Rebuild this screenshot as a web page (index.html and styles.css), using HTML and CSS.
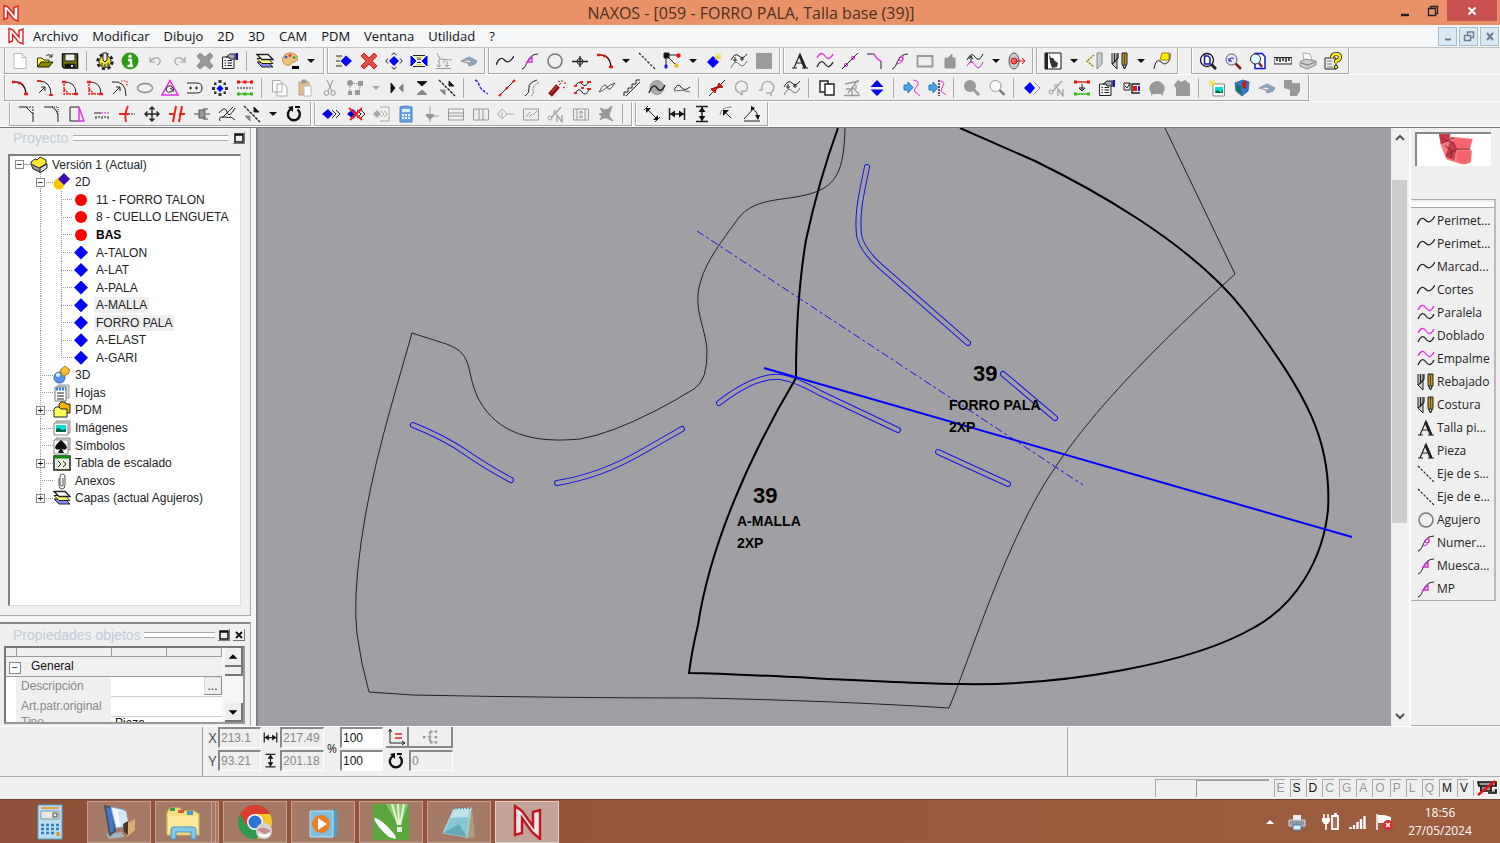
FILE: index.html
```html
<!DOCTYPE html>
<html lang="es">
<head>
<meta charset="utf-8">
<title>NAXOS</title>
<link rel="stylesheet" href="styles.css">
</head>
<body>
<svg class="sprite" aria-hidden="true">
<symbol id="logo" viewBox="0 0 18 18"><path d="M2 1.500L6 3 12 10V3.500L16 2V17L12 15.500 5.500 7.500V14L2 15.500Z" fill="#fff" stroke="#dc2020" stroke-width="1.400"/></symbol>
<symbol id="new" viewBox="0 0 18 18"><path d="M3 1.500H11L15 5.500V16.500H3Z" fill="#fff" stroke="#b8b8b8"/><path d="M11 1.500V5.500H15" stroke="#b8b8b8"/></symbol>
<symbol id="open" viewBox="0 0 18 18"><path d="M1.500 15V6H6L8 8H13V10" fill="#ffff70" stroke="#333300"/><path d="M1.500 15L5 10H17L13 15Z" fill="#868600" stroke="#222200"/><path d="M10 4Q13 1 16 5M13 5H16V2" /></symbol>
<symbol id="save" viewBox="0 0 18 18"><path d="M1.500 2H16.500V16H3L1.500 14.500Z" fill="#777700" stroke="#111" stroke-width="1.500"/><path d="M4 2H14V9H4Z" fill="#eee"/><path d="M4 12H14V16H4Z" fill="#111"/><path d="M11 13V15" stroke="#eee" stroke-width="2"/></symbol>
<symbol id="gear" viewBox="0 0 18 18"><circle cx="9" cy="9.500" r="7" stroke="#222" stroke-width="3.400" stroke-dasharray="3 2.500"/><circle cx="9" cy="9.500" r="6" fill="#e4dc38" stroke="#333"/><path d="M7 1H11V8L9 10 7 8Z" fill="#eee"/><path d="M6 11V14M9 12V15M12 11V14"/></symbol>
<symbol id="info" viewBox="0 0 18 18"><circle cx="9" cy="9" r="8.500" fill="#2c9c10" stroke="none"/><path d="M7 8H10V14M6.500 14H12" stroke="#fff" stroke-width="2.400"/><circle cx="9" cy="4.300" r="1.700" fill="#fff" stroke="none"/></symbol>
<symbol id="undo" viewBox="0 0 18 18"><path d="M4 5V10H9M4 10Q7 5 12 6 16 8 13 12L11 13" stroke="#a5a5a5" stroke-width="1.200"/></symbol>
<symbol id="redo" viewBox="0 0 18 18"><path d="M14 5V10H9M14 10Q11 5 6 6 2 8 5 12L7 13" stroke="#a5a5a5" stroke-width="1.200"/></symbol>
<symbol id="cross" viewBox="0 0 18 18"><path d="M1 4L4 1 9 5 14 1 17 4 13 9 17 14 14 17 9 13 4 17 1 14 5 9Z" fill="#989898" stroke="#909090"/></symbol>
<symbol id="crossred" viewBox="0 0 18 18"><path d="M1 4L4 1 9 6 14 1 17 4 12 9 17 14 14 17 9 12 4 17 1 14 6 9Z" fill="#e64b46" stroke="#bd2d2d"/></symbol>
<symbol id="props" viewBox="0 0 18 18"><path d="M1.500 5H13V16.500H1.500Z" fill="#f4f4f4"/><path d="M3.500 8.500H5M6.500 8.500H11M3.500 11H5M6.500 11H11M3.500 13.500H5M6.500 13.500H11"/><path d="M5 5L9 2H14V7H9L8 5Z" fill="#aaa"/><path d="M14.500 1H17V8H14.500Z" fill="#1414a8" stroke="none"/></symbol>
<symbol id="layers" viewBox="0 0 18 18"><path d="M1 10L6 15H17L12 10Z" fill="#88f"/><path d="M1 6.500L6 11.500H17L12 6.500Z" fill="#ff7"/><path d="M1 2.500L6 7.500H17L12 2.500Z" fill="#fff" stroke-width="1.300"/></symbol>
<symbol id="palette" viewBox="0 0 18 18"><path d="M2 10Q0 5 5 2 12-1 16 4 18 9 13 10 10 10 9 13 4 14 2 10Z" fill="#efc27a" stroke="#c48a3c"/><circle cx="5" cy="5" r="1.500" fill="#35c" stroke="none"/><circle cx="9" cy="3.500" r="1.500" fill="#e34" stroke="none"/><circle cx="13" cy="5.500" r="1.500" fill="#3a4" stroke="none"/><path d="M11 15.500H18" stroke="#000" stroke-width="3"/></symbol>
<symbol id="drop" viewBox="0 0 18 18"><path d="M5 7H13L9 11Z" fill="currentColor" stroke="none"/></symbol>
<symbol id="sew" viewBox="0 0 18 18"><path d="M11 3.500L17 9 11 14.500 5.500 9Z" fill="#00f" stroke="none"/><path d="M1 4H7M1 9H5M1 14H7"/><path d="M2 6H6M2 12H6" stroke="#dd4"/></symbol>
<symbol id="diamove" viewBox="0 0 18 18"><path d="M9 4L14 9 9 14 4 9Z" fill="#00f" stroke="none"/><path d="M6.500 3L9 .8 11.500 3M6.500 15L9 17.200 11.500 15M3 6.500L.8 9 3 11.500M15 6.500L17.200 9 15 11.500"/></symbol>
<symbol id="mirrorb" viewBox="0 0 18 18"><path d="M1 4L6 9 1 14ZM17 4L12 9 17 14Z" fill="#00f" stroke="#00f"/><path d="M3 3.500H15M7 7H11M7 10.500H11M3 14.500H15"/><path d="M6 5.500H12M6 12.500H12" stroke="#dd3"/></symbol>
<symbol id="ramp" viewBox="0 0 18 18"><path d="M2 1L5 7 17 8M5 7L3 10M10 8L8 11M4 9V15M2 13L4 15 6 13M12 9V15M10 13L12 15 14 13M1 16.500H16" stroke="#999"/></symbol>
<symbol id="shoe" viewBox="0 0 18 18"><path d="M1 9L9 5 17 9 15 12 9 14 8 11Z" fill="#88a9c6" stroke="#8294a4"/><path d="M1 9L8 8 13 10 9 11Z" fill="#f5f5f5" stroke="#999"/></symbol>
<symbol id="curve" viewBox="0 0 18 18"><path d="M0 13Q4 3 8.500 8T18 4" stroke-width="1.300"/></symbol>
<symbol id="notch" viewBox="0 0 18 18"><path d="M1 17C7 16 5 2 17 2"/><path d="M6 10H11V5Z" stroke="#d02ed0" stroke-width="1.400"/></symbol>
<symbol id="circle" viewBox="0 0 18 18"><circle cx="9" cy="9" r="7" stroke="#777" stroke-width="1.500"/></symbol>
<symbol id="point" viewBox="0 0 18 18"><circle cx="9" cy="9.500" r="3"/><path d="M1 9.500H17M9 4V15" stroke-width="1.400"/></symbol>
<symbol id="arc" viewBox="0 0 18 18"><path d="M2 3Q14 2 15 15" stroke="#300" stroke-width="1.300"/><path d="M1 3H4M7 4H10M13 15H17" stroke="#e11" stroke-width="2.500"/></symbol>
<symbol id="dash" viewBox="0 0 18 18"><path d="M1 1L17 17" stroke-dasharray="2.500 1.500" stroke-width="1.200"/></symbol>
<symbol id="nodes" viewBox="0 0 18 18"><path d="M3 3V15M3 3H16M3 3L15 15"/><path d="M1 1H6V6H1Z" fill="#111"/><path d="M14 2H17V5H14Z" fill="#e11" stroke="#e11"/><path d="M2 13H4V16H2Z" fill="#11e" stroke="#11e"/><path d="M12 12H15V15H12Z" fill="#ec2" stroke="#da2"/></symbol>
<symbol id="diastar" viewBox="0 0 18 18"><path d="M8 4L14 10 8 16 2 10Z" fill="#00f" stroke="none"/><path d="M13 1V9M9 5H17M10 2L16 8M16 2L10 8" stroke="#e5d42c"/></symbol>
<symbol id="waves" viewBox="0 0 18 18"><path d="M1 8Q5 0 9 4T17 2"/><path d="M1 16Q5 7 9 12T17 9" stroke="#777"/><path d="M5 5V10M3 8H7M12 5V9M10 7H14"/></symbol>
<symbol id="square" viewBox="0 0 18 18"><path d="M1 1H17V17H1Z" fill="#9b9b9b" stroke="none"/></symbol>
<symbol id="letter" viewBox="0 0 18 18"><path d="M3 16L9 2 15 16M5 11H12.500M1 16H6M11 16H17" stroke-width="1.200"/><path d="M8.500 3L14 16" stroke-width="2.600"/></symbol>
<symbol id="parallel" viewBox="0 0 18 18"><path d="M1 6Q5-2 9 4T17 2" stroke="#e42ee4" stroke-width="1.300"/><path d="M1 15Q5 6 9 12T17 10" stroke-width="1.300"/></symbol>
<symbol id="linepts" viewBox="0 0 18 18"><path d="M1 17L17 1"/><circle cx="5" cy="13" r="1.600" stroke="#d22bd2"/><circle cx="12" cy="6" r="1.600" stroke="#d22bd2"/></symbol>
<symbol id="corner" viewBox="0 0 18 18"><path d="M1 2H8M15 9V17"/><path d="M8 2Q11 8 15 9" stroke="#e42ee4" stroke-width="1.500"/></symbol>
<symbol id="curvein" viewBox="0 0 18 18"><path d="M1 17C7 16 5 2 17 2"/><path d="M6 12Q13 11 12 4" stroke="#e42ee4"/><circle cx="10" cy="7" r="2" stroke="#c2c"/></symbol>
<symbol id="rect" viewBox="0 0 18 18"><path d="M1.500 4H16.500V14.500H1.500Z" stroke="#999" stroke-width="1.800" fill="#eee"/></symbol>
<symbol id="hand" viewBox="0 0 18 18"><path d="M4 16V6H7L11 2V6H14V16Z" fill="#979797" stroke="#979797"/></symbol>
<symbol id="swap" viewBox="0 0 18 18"><path d="M1 8Q5-1 9 5T17 2M5 4V11M3 7L5 4 7 7"/><path d="M1 14Q5 6 9 13T17 10" stroke="#d22bd2"/></symbol>
<symbol id="target" viewBox="0 0 18 18"><ellipse cx="6" cy="9" rx="5" ry="8" fill="#ccc" stroke="#555"/><circle cx="6" cy="9" r="3" fill="#e66" stroke="#d11"/><path d="M7 9H17M14 6L17 9 14 12" stroke="#e11"/></symbol>
<symbol id="photo" viewBox="0 0 18 18"><path d="M1 1H17V17H1Z" fill="#fff" stroke="#111"/><path d="M1 1H4V17H1Z" fill="#222" stroke="none"/><path d="M5 2L7 6 9 6 11 9 14 11 13 15 8 16 6 10Z" fill="#333" stroke="none"/></symbol>
<symbol id="knifeframe" viewBox="0 0 18 18"><path d="M8 3L1 9 8 15" stroke="#998b00" stroke-dasharray="2 1" stroke-width="1.500"/><path d="M11 1H16V12L11 17Z" fill="#ccc" stroke="#888"/></symbol>
<symbol id="knife" viewBox="0 0 18 18"><path d="M1 1V12L6 17V1" fill="#ccc"/><path d="M3.500 1V10L1 12M3.500 10L7 6V1" stroke-width="1.200"/><path d="M11 1H16V12L13.500 17 11 12Z" fill="#b39728"/><path d="M13.500 1V12" stroke="#5c4b00"/><path d="M12 13H15L13.500 17Z" fill="#eee"/></symbol>
<symbol id="flagc" viewBox="0 0 18 18"><path d="M1 17Q3 5 8 10T17 7V1"/><path d="M9 1H16V8H7Z" fill="#fe0" stroke="#998b00"/></symbol>
<symbol id="zoomdoc" viewBox="0 0 18 18"><circle cx="8" cy="8" r="6.500" fill="#fff" stroke="#111" stroke-width="1.300"/><path d="M5.500 4H9L11 6V12H5.500Z" stroke="#11c" stroke-width="1.500"/><path d="M12.500 12.500L17 17" stroke-width="3"/></symbol>
<symbol id="zoomback" viewBox="0 0 18 18"><circle cx="7.500" cy="7.500" r="5.500" fill="#e8e8ff" stroke="#555"/><path d="M5 6V9H8M5 9Q7 4 10 7" stroke="#11a"/><path d="M11.500 11.500L17 17" stroke="#7a2020" stroke-width="2.500"/></symbol>
<symbol id="zoompage" viewBox="0 0 18 18"><path d="M6 1.500H13L16 4.500V16.500H6Z" fill="#fff" stroke="#11d" stroke-width="1.500"/><circle cx="6.500" cy="7" r="5" fill="#dff"/><path d="M10 11L13 15" stroke="#822" stroke-width="2.500"/></symbol>
<symbol id="ruler" viewBox="0 0 18 18"><path d="M0 5.500H18V12H0Z" fill="#eee"/><path d="M3 6V9M6 6V10M9 6V9M12 6V10M15 6V9" stroke-width="1.500"/></symbol>
<symbol id="printer" viewBox="0 0 18 18"><path d="M5 9L4 1 11 2 13 8Z" fill="#fff" stroke="#aaa"/><path d="M1 10L6 7 17 9V13L8 17 1 14Z" fill="#ccc" stroke="#8a8a8a"/><path d="M2 11L9 13 16 10" stroke="#777"/></symbol>
<symbol id="help" viewBox="0 0 18 18"><path d="M1 6H12V17H1Z" fill="#eee"/><path d="M3 9H8M3 12H8M3 15H9" stroke="#777"/><path d="M8 6Q8 2 12 2T16 5 12 9V11" stroke="#222" stroke-width="4"/><path d="M8 6Q8 2 12 2T16 5 12 9V11" stroke="#fe0" stroke-width="2.400"/><circle cx="12" cy="15" r="1.800" fill="#fe0"/></symbol>
<symbol id="arcarrow" viewBox="0 0 18 18"><path d="M3 2Q15 2 15 16"/><path d="M3 14L9 8M5 8H9V12"/><path d="M1 2H5M13 16H17" stroke="#e22" stroke-width="2"/></symbol>
<symbol id="arcsq" viewBox="0 0 18 18"><path d="M2 3Q15 2 15 15"/><path d="M3 5V15H13M3 10L8 15" stroke="#e22" stroke-dasharray="2 1" stroke-width="1.500"/><path d="M1 3H5M13 15H17" stroke="#e22" stroke-width="2.500"/></symbol>
<symbol id="arctan" viewBox="0 0 18 18"><path d="M1 3Q15 1 15 17"/><path d="M2 15L9 8M5 8H9V12"/><path d="M10 2H16V8" stroke="#e22" stroke-dasharray="1.500 1.500"/></symbol>
<symbol id="ellipse" viewBox="0 0 18 18"><ellipse cx="9" cy="9" rx="7.500" ry="4.500" stroke="#888" stroke-width="1.300"/></symbol>
<symbol id="spiral" viewBox="0 0 18 18"><path d="M9 1.500L17 16H1Z" stroke="#e42ee4" stroke-width="1.500"/><path d="M9 10Q12 8 11 12 7 15 5 11 6 6 10 7 14 9 12 13"/></symbol>
<symbol id="slot" viewBox="0 0 18 18"><path d="M1 4H11Q16 4 16 9T11 14H1"/><path d="M3 9H6M4.500 7.500V10.500M9 9H12M10.500 7.500V10.500"/></symbol>
<symbol id="ring" viewBox="0 0 18 18"><path d="M7.500 1H10.500V4H7.500ZM7.500 14H10.500V17H7.500ZM1 8H4V11H1ZM14 8H17V11H14ZM3 3.500H5.500V6H3ZM12.500 3.500H15V6H12.500ZM3 12.500H5.500V15H3ZM12.500 12.500H15V15H12.500Z" fill="#334" stroke="none"/><path d="M9 6L12.500 9.500 9 13 5.500 9.500Z" fill="#00f" stroke="none"/></symbol>
<symbol id="scale" viewBox="0 0 18 18"><path d="M1 3H17" stroke="#d22"/><path d="M1 3H4M7.500 3H10.500M14 3H17" stroke="#d11" stroke-width="3"/><path d="M1 9H17" stroke-dasharray="2 1"/><path d="M1 15H17" stroke="#3b1" stroke-width="1.500"/><path d="M1 15H4M7.500 15H10.500M14 15H17" stroke="#3b1" stroke-width="3"/></symbol>
<symbol id="scale2" viewBox="0 0 18 18"><path d="M1 3H17" stroke="#d22" stroke-width="1.500"/><path d="M1 3H4M14 3H17" stroke="#d11" stroke-width="3"/><path d="M9 5V12M6 9L9 12 12 9M6 9H12"/><path d="M1 15H17" stroke="#3b1" stroke-width="1.500"/><path d="M1 15H4M14 15H17" stroke="#3b1" stroke-width="3"/></symbol>
<symbol id="copy" viewBox="0 0 18 18"><path d="M1.500 1.500H9L11 4V13H1.500ZM6 5H13L16 8V17H6Z" fill="#fff" stroke="#aaa"/></symbol>
<symbol id="paste" viewBox="0 0 18 18"><path d="M3 3H13V16H3Z" fill="#e3bd8c" stroke="#b8a58d"/><path d="M6 1H10V4H6Z" fill="#999" stroke="#999"/><path d="M8 7H15V17H8Z" fill="#fff" stroke="#bbb"/></symbol>
<symbol id="cut" viewBox="0 0 18 18"><path d="M6 1L11 12M12 1L7 12" stroke="#999"/><circle cx="5.500" cy="14" r="2.300" stroke="#999"/><circle cx="12" cy="14" r="2.300" stroke="#999"/></symbol>
<symbol id="link" viewBox="0 0 18 18"><path d="M4 4L15 5M4 4L4 14M15 5L12 14" stroke="#999" stroke-dasharray="2 1"/><circle cx="4" cy="4" r="3" fill="#999" stroke="none"/><path d="M12 2H17V7H12ZM2 12H6V16H2ZM9 11H14V16H9Z" fill="#999" stroke="none"/></symbol>
<symbol id="fliph" viewBox="0 0 18 18"><path d="M3 4V14L7 9Z" fill="#111"/><path d="M15 5V13L11 9Z" fill="#888" stroke="#888"/></symbol>
<symbol id="flipv" viewBox="0 0 18 18"><path d="M4 2.500H14L9 7Z" fill="#111"/><path d="M4 15.500H14L9 11Z" fill="#888" stroke="#888"/></symbol>
<symbol id="flipd" viewBox="0 0 18 18"><path d="M1 1L17 17" stroke-dasharray="3 1" stroke-width="1.400"/><path d="M11 2V7H16Z" fill="#111"/><path d="M7 11V16L2 11Z" fill="#888" stroke="#888"/></symbol>
<symbol id="blueline" viewBox="0 0 18 18"><path d="M2 1Q5 2 6 6T15 15" stroke="#22d" stroke-dasharray="3 1.500" stroke-width="1.400"/></symbol>
<symbol id="redline" viewBox="0 0 18 18"><path d="M2 16L16 2"/><path d="M1 17L3 15M8 10L10 8M15 3L17 1" stroke="#e11" stroke-width="2.200"/></symbol>
<symbol id="offset" viewBox="0 0 18 18"><path d="M2 17Q7 14 6 9T14 1"/><path d="M8 17Q11 15 10 11T17 3" stroke="#777" stroke-dasharray="2 1"/></symbol>
<symbol id="cracker" viewBox="0 0 18 18"><path d="M2 16L10 7" stroke="#8d1212" stroke-width="5"/><path d="M3 14L9 7" stroke="#e55"/><path d="M11 6L13 4M14 1V3M16 4H18M15 8L17 9M10 2L12 3" stroke="#922"/></symbol>
<symbol id="redwaves" viewBox="0 0 18 18"><path d="M2 7Q6 1 9 5T16 3M2 14Q6 8 9 13T16 11"/><path d="M1 7H4M14 3H18M1 14H4M8 9H11M14 10H18M7 3H10" stroke="#e22" stroke-width="2"/></symbol>
<symbol id="eyecurve" viewBox="0 0 18 18"><path d="M1 13Q7 2 9 8T17 4M1 13Q5 12 8 9T17 4" stroke="#555"/></symbol>
<symbol id="steps" viewBox="0 0 18 18"><path d="M1 17V13H5V9H9V5H13V1H17M3 17L17 3"/></symbol>
<symbol id="ballcurve" viewBox="0 0 18 18"><circle cx="9" cy="8.500" r="7" fill="#aaa" stroke="#999"/><path d="M1 14Q5 3 9 9T17 6" stroke-width="1.400"/></symbol>
<symbol id="flatcurve" viewBox="0 0 18 18"><path d="M1 11Q5 3 8 8T17 8"/><path d="M1 12Q9 10 17 13" stroke="#666"/></symbol>
<symbol id="join" viewBox="0 0 18 18"><path d="M1 17L17 1"/><path d="M3 10L9 8 7 14ZM15 8L9 9 11 4Z" fill="#e11" stroke="#811"/></symbol>
<symbol id="rotl" viewBox="0 0 18 18"><path d="M5 13A6 6 0 1 1 13 12M2 10L9 16M13 12H9V16" stroke="#aaa" stroke-width="1.400"/></symbol>
<symbol id="rotr" viewBox="0 0 18 18"><path d="M4 10A6 6 0 1 1 12 14M8 14H13V17M4 7V11H1" stroke="#aaa" stroke-width="1.400"/></symbol>
<symbol id="dup" viewBox="0 0 18 18"><path d="M2 2H10V13H2Z" fill="#fff" stroke-width="1.400"/><path d="M7 5H16V16H7Z" fill="#fff" stroke-width="1.400"/></symbol>
<symbol id="fan" viewBox="0 0 18 18"><path d="M2 5L16 2M5 14L15 1M9 8L16 15M1 16.500H17M9 8V16M3 10H8M13 6V10" stroke="#999" stroke-width="1.300"/></symbol>
<symbol id="updown" viewBox="0 0 18 18"><path d="M2.500 8L9 1 15.500 8ZM2.500 10.500H15.500L9 17Z" fill="#00f" stroke="none"/></symbol>
<symbol id="arrowc" viewBox="0 0 18 18"><path d="M1 6H5V3L10 8.500 5 14V11H1Z" fill="#46a8ec" stroke="#2875bd"/><path d="M10 1Q18 2 14 7T12 13 17 17" stroke="#e42ee4"/></symbol>
<symbol id="arrowd" viewBox="0 0 18 18"><path d="M1 6H5V3L10 8.500 5 14V11H1Z" fill="#46a8ec" stroke="#2875bd"/><path d="M11 1V17" stroke-dasharray="2 1" stroke-width="1.500"/><path d="M11 2Q18 2 15 7T14 13 18 16" stroke="#e42ee4"/></symbol>
<symbol id="magoff" viewBox="0 0 18 18"><circle cx="7" cy="7" r="6" fill="#999" stroke="none"/><path d="M10 10L16 16" stroke="#999" stroke-width="3"/></symbol>
<symbol id="mag" viewBox="0 0 18 18"><circle cx="7.500" cy="7" r="5.500" fill="#fafafa" stroke="#999"/><path d="M11.500 11L16.500 16" stroke="#777" stroke-width="2.400"/></symbol>
<symbol id="diaghost" viewBox="0 0 18 18"><path d="M7 3L12 9 7 15 1 9Z" fill="#00f" stroke="none"/><path d="M12 4L17 9 12 14" stroke="#555" stroke-dasharray="2 1"/></symbol>
<symbol id="nlink" viewBox="0 0 18 18"><path d="M4 13L14 2M10 17V10L15 17V10" stroke="#a2a2a2" stroke-width="1.300"/><circle cx="3" cy="13" r="2" stroke="#a2a2a2"/><circle cx="8" cy="7" r="1.500" stroke="#a2a2a2"/></symbol>
<symbol id="check" viewBox="0 0 18 18"><path d="M1 4H7V11H1ZM2 7L4 9 7 4"/><path d="M17 5H9V14H17" stroke-width="1.400"/><path d="M10 7H14V12H10Z" fill="#e11" stroke="none"/><path d="M15 7H17V12H15Z" fill="#11e" stroke="none"/></symbol>
<symbol id="blob" viewBox="0 0 18 18"><path d="M3 17V14Q-1 8 4 4 9 0 14 4 19 9 15 14V17L13 15H5Z" fill="#999" stroke="none"/></symbol>
<symbol id="vest" viewBox="0 0 18 18"><path d="M1 6L5 1 8 3 12 1 17 5V17H3V9Z" fill="#999" stroke="none"/></symbol>
<symbol id="imgnew" viewBox="0 0 18 18"><path d="M5 5H16.500V17H5Z" fill="#fff" stroke="#888"/><path d="M7 8H15V14H7Z" fill="#0dd" stroke="none"/><path d="M7 14Q9 9 11 12T15 11V14Z" fill="#063" stroke="none"/><path d="M4 0V8M0 4H8M1 1L7 7M7 1L1 7" stroke="#eee13a"/></symbol>
<symbol id="cube" viewBox="0 0 18 18"><path d="M2 4L10 1 16 3 15 12 9 17 3 12Z" fill="#37c" stroke="#469"/><path d="M9 3L14 2 13 10 9 8Z" fill="#b22" stroke="none"/><path d="M3 5L8 7 9 16 4 12Z" fill="#176" stroke="none"/></symbol>
<symbol id="clip" viewBox="0 0 18 18"><path d="M1 1H9V4H17V12L14 17H7V11L1 9Z" fill="#999" stroke="none"/></symbol>
<symbol id="fillet" viewBox="0 0 18 18"><path d="M1 2H9Q14 4 15 10V17"/><path d="M9 2H15V9" stroke-dasharray="1 1"/></symbol>
<symbol id="chamf" viewBox="0 0 18 18"><path d="M1 2H8L15 9V17"/><path d="M8 2H15V9" stroke-dasharray="2 1"/></symbol>
<symbol id="trapez" viewBox="0 0 18 18"><path d="M11 2H2V16H11"/><path d="M11 2L16 16H11Z" stroke="#e42ee4" stroke-width="1.400"/></symbol>
<symbol id="comb" viewBox="0 0 18 18"><path d="M1 8H8"/><path d="M8 8H17" stroke="#d2d" stroke-dasharray="2 1"/><path d="M3 11V14M6 11V13M9 11V14M12 11V13M15 11V14"/></symbol>
<symbol id="cutone" viewBox="0 0 18 18"><path d="M10 9H17" stroke-dasharray="2 1"/><path d="M10 1Q6 9 8 17M1 9H11" stroke="#e22" stroke-width="1.800"/></symbol>
<symbol id="move" viewBox="0 0 18 18"><path d="M9 2V16M2 9H16M6.500 4.500L9 2 11.500 4.500M6.500 13.500L9 16 11.500 13.500M4.500 6.500L2 9 4.500 11.500M13.500 6.500L16 9 13.500 11.500" stroke-width="1.400"/></symbol>
<symbol id="cuttwo" viewBox="0 0 18 18"><path d="M8 1L5 17M14 1L11 17M1 9H7M11 9H17" stroke="#e22" stroke-width="2"/></symbol>
<symbol id="stamp" viewBox="0 0 18 18"><path d="M1 9H6M10 4H15M10 14H15M13 9H17" stroke="#444"/><path d="M6 5H12V13H6Z" fill="#999" stroke="#555"/></symbol>
<symbol id="weave" viewBox="0 0 18 18"><path d="M1 8Q7 0 9 7T17 3M2 16Q0 11 6 12T13 12L17 15M4 13L15 2"/></symbol>
<symbol id="reload" viewBox="0 0 18 18"><path d="M12.500 4.500A6 6 0 1 1 6 4" stroke="#111" stroke-width="2.400"/><path d="M8 1V7L3 2Z" fill="#111" stroke="none"/><path d="M10 2H15" stroke="#111" stroke-width="2"/></symbol>
<symbol id="diago" viewBox="0 0 18 18"><path d="M6 4L11 9 6 14 0 9Z" fill="#00d" stroke="none"/><path d="M10 5L14 9 10 13M14 5L18 9 14 13"/></symbol>
<symbol id="diano" viewBox="0 0 18 18"><path d="M6 4L11 9 6 14 0 9Z" fill="#00d" stroke="none"/><path d="M10 5L14 9 10 13M14 5L18 9 14 13"/><path d="M2 3L15 15M15 3L3 15" stroke="#e22" stroke-width="2"/></symbol>
<symbol id="diaoff" viewBox="0 0 18 18"><path d="M5 5L9 9 5 13 1 9Z" fill="#aaa" stroke="none"/><path d="M9 6L12 9 9 12M12 6L15 9 12 12M8 2H17V16H8" stroke="#aaa"/></symbol>
<symbol id="sheet" viewBox="0 0 18 18"><path d="M3 2Q9 0 15 2V17H3Z" fill="#67a2e8" stroke="#4d7fbd"/><path d="M5 4H13V7H5Z" fill="#d8ecff" stroke="none"/><path d="M5 10H13M5 13H13" stroke="#eef6ff" stroke-dasharray="2 1" stroke-width="2"/></symbol>
<symbol id="pin" viewBox="0 0 18 18"><path d="M8 1V17M8 11H17" stroke="#a2a2a2"/><path d="M4 9H12V11L8 15 4 11Z" fill="#999" stroke="none"/></symbol>
<symbol id="rowsp" viewBox="0 0 18 18"><path d="M1.500 4H16.500V15H1.500ZM2 8H16M2 11H16" stroke="#999"/></symbol>
<symbol id="colsp" viewBox="0 0 18 18"><path d="M1.500 4H16.500V15H1.500ZM7 4V15M11 4V15" stroke="#999"/></symbol>
<symbol id="tag" viewBox="0 0 18 18"><path d="M5 4L10 9 5 14 1 9ZM5 7V12M10 9H17" stroke="#aaa"/></symbol>
<symbol id="hatch" viewBox="0 0 18 18"><path d="M1.500 4H16.500V15H1.500ZM4 12L8 7M7 12L10 9M11 10L15 6" stroke="#999"/></symbol>
<symbol id="boxarr" viewBox="0 0 18 18"><path d="M1.500 4H16.500V15H1.500ZM5 4V15M13 4V15M9 6V13M7 8L9 6 11 8M7 11L9 13 11 11" stroke="#999"/></symbol>
<symbol id="burst" viewBox="0 0 18 18"><path d="M3 3L8 5 11 4 15 1 13 7 12 11 16 16 10 13 6 13 3 15 5 11 2 9 6 8Z" fill="#999" stroke="#999"/></symbol>
<symbol id="dimd" viewBox="0 0 18 18"><path d="M4 4L14 14M1 5L5 1M12 17L17 12"/><path d="M3 3H8L3 8ZM15 15H10L15 10Z" fill="#111" stroke="none"/></symbol>
<symbol id="dimh" viewBox="0 0 18 18"><path d="M1.500 3V15M16.500 3V15M2 9H16" stroke-width="1.500"/><path d="M2 9L7 5.500V12.500ZM16 9L11 5.500V12.500Z" fill="#111" stroke="none"/></symbol>
<symbol id="dimv" viewBox="0 0 18 18"><path d="M3 1.500H15M3 16.500H15M9 2V16" stroke-width="1.500"/><path d="M9 2L5.500 7H12.500ZM9 16L5.500 11H12.500Z" fill="#111" stroke="none"/></symbol>
<symbol id="dimr" viewBox="0 0 18 18"><path d="M2 10Q2 2 14 2" stroke="#888"/><path d="M6 6L13 13"/><path d="M5 5H11L5 11Z" fill="#111" stroke="none"/></symbol>
<symbol id="dima" viewBox="0 0 18 18"><path d="M1 14L11 3M8 3Q15 6 15 14M1 16H17"/><path d="M8 1V6L12 3ZM12 10H17L15 15Z" fill="#111" stroke="none"/></symbol>
<symbol id="box" viewBox="0 0 18 18"><path d="M1 8L8 4 17 8 10 16 3 13Z" fill="#999"/><path d="M1 6L5 3 7 4 10 1 16 4V8L9 12 1 8Z" fill="#ffe92e"/><path d="M10 12L17 8V12L10 17Z" fill="#ddd"/></symbol>
<symbol id="two" viewBox="0 0 18 18"><circle cx="6" cy="11" r="5.500" fill="#ffc400" stroke="none"/><path d="M11 0L17 6 11 12 5 6Z" fill="#3b08b5" stroke="none"/></symbol>
<symbol id="three" viewBox="0 0 18 18"><circle cx="6.500" cy="11.500" r="5.500" fill="#5b91ee" stroke="#3464c0"/><circle cx="5" cy="9" r="2" fill="#dff" stroke="none"/><path d="M7 4L12 0 17 4 15 8 10 10Z" fill="#f3bd32" stroke="#b67d12"/></symbol>
<symbol id="pages" viewBox="0 0 18 18"><path d="M5 1H16V14H5Z" fill="#ddd" stroke="#999"/><path d="M2 3H13V17H2Z" fill="#fff" stroke="#777"/><path d="M3 5H13" stroke="#2680e5" stroke-width="3" stroke-dasharray="2 1"/><path d="M4 9H11M4 12H11M4 15H11"/></symbol>
<symbol id="folders" viewBox="0 0 18 18"><path d="M6 3L8 1H12L13 3H17V12H6Z" fill="#f5b500"/><path d="M1 8L3 6H6L8 8H14V16H1Z" fill="#ffff5a"/></symbol>
<symbol id="images" viewBox="0 0 18 18"><path d="M3 2H17V14H3Z" fill="#ddd" stroke="#888"/><path d="M1 4H15V16H1Z" fill="#fff" stroke="#888"/><path d="M3 6H13V13H3Z" fill="#0dd" stroke="none"/><path d="M3 10L6 9 9 11 13 10V13H3Z" fill="#064" stroke="none"/></symbol>
<symbol id="spade" viewBox="0 0 18 18"><path d="M3 1H17V13H3Z" fill="#ddd" stroke="#888"/><path d="M1 3H15V17H1Z" fill="#fff" stroke="#888"/><path d="M8 3Q14 8 14 11 12 14 9 12L11 16H5L7 12Q4 14 2 11 2 8 8 3Z" fill="#111" stroke="none"/></symbol>
<symbol id="table" viewBox="0 0 18 18"><path d="M1 2H17V16H1Z" fill="#e8efe0" stroke-width="1.500"/><path d="M1 3H17" stroke="#128a12" stroke-width="3"/><path d="M5 7L8 10 5 13M10 7L13 10 10 13"/></symbol>
<symbol id="pclip" viewBox="0 0 18 18"><path d="M6 6V13Q6 17 9 17T12 13V5Q12 2 9.500 2T7 5V12Q7 14 9 14T10 12V6" stroke="#555"/></symbol>
</svg>

<header class="titlebar">
<svg class="i"><use href="#logo"/></svg>
<h1>NAXOS - [059 - FORRO PALA, Talla base (39)]</h1>
<div class="winbtns">
<button aria-label="Minimizar"><svg viewBox="0 0 12 12"><path d="M2 10H10" stroke-width="2.400"/></svg></button>
<button aria-label="Restaurar"><svg viewBox="0 0 12 12"><path d="M1.500 3.500H8.500V10.500H1.500ZM3.500 3V1.500H10.500V8.500H9" stroke-width="1.300"/></svg></button>
<button class="close" aria-label="Cerrar"><svg viewBox="0 0 12 12"><path d="M2.500 2.500L9.500 9.500M9.500 2.500L2.500 9.500" stroke-width="1.900"/></svg></button>
</div>
</header>
<nav class="menubar">
<svg class="i"><use href="#logo"/></svg>
<button>Archivo</button><button>Modificar</button><button>Dibujo</button><button>2D</button><button>3D</button><button>CAM</button><button>PDM</button><button>Ventana</button><button>Utilidad</button><button>?</button>
<div class="mdi">
<button aria-label="Minimizar documento"><svg viewBox="0 0 12 12"><path d="M3 9.500H9" stroke-width="2"/></svg></button>
<button aria-label="Restaurar documento"><svg viewBox="0 0 12 12"><path d="M1.500 5.500H7.500V10.500H1.500ZM4.500 5V2H10.500V7.500H8" stroke-width="1.500"/></svg></button>
<button aria-label="Cerrar documento"><svg viewBox="0 0 12 12"><path d="M3 3L9 10M9 3L3 10" stroke-width="2"/></svg></button>
</div>
</nav>

<section class="toolbars" aria-label="Barras de herramientas">
<div class="row">
<div class="grp"><button aria-label="Nuevo"><svg class="i"><use href="#new"/></svg></button><button aria-label="Abrir"><svg class="i"><use href="#open"/></svg></button><button aria-label="Guardar"><svg class="i"><use href="#save"/></svg></button><hr><button aria-label="Opciones"><svg class="i"><use href="#gear"/></svg></button><button aria-label="Información"><svg class="i"><use href="#info"/></svg></button><button aria-label="Deshacer"><svg class="i"><use href="#undo"/></svg></button><button aria-label="Rehacer"><svg class="i"><use href="#redo"/></svg></button><button aria-label="Borrar"><svg class="i"><use href="#cross"/></svg></button><button aria-label="Propiedades"><svg class="i"><use href="#props"/></svg></button><hr><button aria-label="Capas"><svg class="i"><use href="#layers"/></svg></button><button aria-label="Color"><svg class="i"><use href="#palette"/></svg></button><button class="dd" aria-label="Más colores"><svg class="i"><use href="#drop"/></svg></button></div>
<div class="grp"><button aria-label="Crear pieza"><svg class="i"><use href="#sew"/></svg></button><button aria-label="Eliminar pieza"><svg class="i"><use href="#crossred"/></svg></button><button aria-label="Mover pieza"><svg class="i"><use href="#diamove"/></svg></button><button aria-label="Simetría de pieza"><svg class="i"><use href="#mirrorb"/></svg></button><button aria-label="Proyectar"><svg class="i"><use href="#ramp"/></svg></button><button aria-label="Horma"><svg class="i"><use href="#shoe"/></svg></button></div>
<div class="grp"><button aria-label="Curva"><svg class="i"><use href="#curve"/></svg></button><button aria-label="Muesca"><svg class="i"><use href="#notch"/></svg></button><button aria-label="Círculo"><svg class="i"><use href="#circle"/></svg></button><button aria-label="Punto"><svg class="i"><use href="#point"/></svg></button><button aria-label="Arco"><svg class="i"><use href="#arc"/></svg></button><button class="dd" aria-label="Más arcos"><svg class="i"><use href="#drop"/></svg></button><button aria-label="Eje"><svg class="i"><use href="#dash"/></svg></button><button aria-label="Nodos"><svg class="i"><use href="#nodes"/></svg></button><button class="dd" aria-label="Más nodos"><svg class="i"><use href="#drop"/></svg></button><button aria-label="Nueva pieza"><svg class="i"><use href="#diastar"/></svg></button><button aria-label="Ajustar curvas"><svg class="i"><use href="#waves"/></svg></button><button aria-label="Relleno"><svg class="i"><use href="#square"/></svg></button></div>
<div class="grp"><button aria-label="Texto"><svg class="i"><use href="#letter"/></svg></button><button aria-label="Paralela"><svg class="i"><use href="#parallel"/></svg></button><button aria-label="Línea de puntos"><svg class="i"><use href="#linepts"/></svg></button><button aria-label="Esquina"><svg class="i"><use href="#corner"/></svg></button><button aria-label="Numeración"><svg class="i"><use href="#curvein"/></svg></button><button aria-label="Rectángulo"><svg class="i"><use href="#rect"/></svg></button><button aria-label="Mano"><svg class="i"><use href="#hand"/></svg></button><button aria-label="Intercambiar"><svg class="i"><use href="#swap"/></svg></button><button class="dd" aria-label="Más cambios"><svg class="i"><use href="#drop"/></svg></button><button aria-label="Centro"><svg class="i"><use href="#target"/></svg></button></div>
<div class="grp"><button aria-label="Imagen"><svg class="i"><use href="#photo"/></svg></button><button class="dd" aria-label="Más imágenes"><svg class="i"><use href="#drop"/></svg></button><button aria-label="Marco de corte"><svg class="i"><use href="#knifeframe"/></svg></button><button aria-label="Cuchilla"><svg class="i"><use href="#knife"/></svg></button><button class="dd" aria-label="Más cuchillas"><svg class="i"><use href="#drop"/></svg></button><button aria-label="Inicio de corte"><svg class="i"><use href="#flagc"/></svg></button></div>
<div class="grp extra"><button aria-label="Zoom documento"><svg class="i"><use href="#zoomdoc"/></svg></button><button aria-label="Zoom anterior"><svg class="i"><use href="#zoomback"/></svg></button><button aria-label="Zoom página"><svg class="i"><use href="#zoompage"/></svg></button><button aria-label="Regla"><svg class="i"><use href="#ruler"/></svg></button><button aria-label="Imprimir"><svg class="i"><use href="#printer"/></svg></button><button aria-label="Ayuda"><svg class="i"><use href="#help"/></svg></button></div>
</div>
<div class="row">
<div class="grp"><button aria-label="Arco 1"><svg class="i"><use href="#arc"/></svg></button><button aria-label="Arco 2"><svg class="i"><use href="#arcarrow"/></svg></button><button aria-label="Arco 3"><svg class="i"><use href="#arcsq"/></svg></button><button aria-label="Arco 4"><svg class="i"><use href="#arcsq"/></svg></button><button aria-label="Arco tangente"><svg class="i"><use href="#arctan"/></svg></button><button aria-label="Elipse"><svg class="i"><use href="#ellipse"/></svg></button><button aria-label="Espiral"><svg class="i"><use href="#spiral"/></svg></button><button aria-label="Ranura"><svg class="i"><use href="#slot"/></svg></button><button aria-label="Matriz polar"><svg class="i"><use href="#ring"/></svg></button><button aria-label="Escalado"><svg class="i"><use href="#scale"/></svg></button><hr><button aria-label="Copiar"><svg class="i"><use href="#copy"/></svg></button><button aria-label="Pegar"><svg class="i"><use href="#paste"/></svg></button><button aria-label="Cortar"><svg class="i"><use href="#cut"/></svg></button><button aria-label="Enlazar"><svg class="i"><use href="#link"/></svg></button><button class="dd off" aria-label="Más enlaces"><svg class="i"><use href="#drop"/></svg></button><button aria-label="Voltear horizontal"><svg class="i"><use href="#fliph"/></svg></button><button aria-label="Voltear vertical"><svg class="i"><use href="#flipv"/></svg></button><button aria-label="Voltear por eje"><svg class="i"><use href="#flipd"/></svg></button><hr><button aria-label="Línea azul"><svg class="i"><use href="#blueline"/></svg></button><button aria-label="Segmentar"><svg class="i"><use href="#redline"/></svg></button><button aria-label="Desplazar"><svg class="i"><use href="#offset"/></svg></button><button aria-label="Explotar"><svg class="i"><use href="#cracker"/></svg></button><button aria-label="Reemplazar curva"><svg class="i"><use href="#redwaves"/></svg></button><button aria-label="Promedio"><svg class="i"><use href="#eyecurve"/></svg></button><button aria-label="Escalones"><svg class="i"><use href="#steps"/></svg></button><button aria-label="Suavizar"><svg class="i"><use href="#ballcurve"/></svg></button><button aria-label="Aplanar"><svg class="i"><use href="#flatcurve"/></svg></button><hr><button aria-label="Unir"><svg class="i"><use href="#join"/></svg></button><button aria-label="Girar a la izquierda"><svg class="i"><use href="#rotl"/></svg></button><button aria-label="Girar a la derecha"><svg class="i"><use href="#rotr"/></svg></button><button aria-label="Deformar"><svg class="i"><use href="#waves"/></svg></button><hr><button aria-label="Duplicar"><svg class="i"><use href="#dup"/></svg></button><button aria-label="Abanico"><svg class="i"><use href="#fan"/></svg></button><button aria-label="Subir o bajar"><svg class="i"><use href="#updown"/></svg></button><hr><button aria-label="Llevar a curva"><svg class="i"><use href="#arrowc"/></svg></button><button aria-label="Llevar a eje"><svg class="i"><use href="#arrowd"/></svg></button><hr><button aria-label="Buscar"><svg class="i"><use href="#magoff"/></svg></button><button aria-label="Lupa"><svg class="i"><use href="#mag"/></svg></button><hr><button aria-label="Copiar pieza"><svg class="i"><use href="#diaghost"/></svg></button><button aria-label="Numerar"><svg class="i"><use href="#nlink"/></svg></button><button aria-label="Escalar"><svg class="i"><use href="#scale2"/></svg></button><button aria-label="Ficha"><svg class="i"><use href="#props"/></svg></button><button aria-label="Validar"><svg class="i"><use href="#check"/></svg></button><button aria-label="Forma"><svg class="i"><use href="#blob"/></svg></button><button aria-label="Patrón"><svg class="i"><use href="#vest"/></svg></button><hr><button aria-label="Nueva imagen"><svg class="i"><use href="#imgnew"/></svg></button><button aria-label="Material"><svg class="i"><use href="#cube"/></svg></button><button aria-label="Ver horma"><svg class="i"><use href="#shoe"/></svg></button><button aria-label="Recortar"><svg class="i"><use href="#clip"/></svg></button></div>
</div>
<div class="row">
<div class="grp wide"><button aria-label="Chaflán"><svg class="i"><use href="#chamf"/></svg></button><button aria-label="Redondeo"><svg class="i"><use href="#fillet"/></svg></button><button aria-label="Trapecio"><svg class="i"><use href="#trapez"/></svg></button><button aria-label="Peine"><svg class="i"><use href="#comb"/></svg></button><button aria-label="Corte simple"><svg class="i"><use href="#cutone"/></svg></button><button aria-label="Mover"><svg class="i"><use href="#move"/></svg></button><button aria-label="Corte doble"><svg class="i"><use href="#cuttwo"/></svg></button><button aria-label="Encajar"><svg class="i"><use href="#stamp"/></svg></button><button aria-label="Entrelazar"><svg class="i"><use href="#weave"/></svg></button><button aria-label="Simetría"><svg class="i"><use href="#flipd"/></svg></button><button class="dd" aria-label="Más simetrías"><svg class="i"><use href="#drop"/></svg></button><button aria-label="Girar"><svg class="i"><use href="#reload"/></svg></button></div>
<div class="grp"><button aria-label="Escalar pieza"><svg class="i"><use href="#diago"/></svg></button><button aria-label="Quitar escalado"><svg class="i"><use href="#diano"/></svg></button><button aria-label="Bloquear escalado"><svg class="i"><use href="#diaoff"/></svg></button><button aria-label="Calcular"><svg class="i"><use href="#sheet"/></svg></button><button aria-label="Fijar"><svg class="i"><use href="#pin"/></svg></button><button aria-label="Filas"><svg class="i"><use href="#rowsp"/></svg></button><button aria-label="Columnas"><svg class="i"><use href="#colsp"/></svg></button><button aria-label="Etiqueta"><svg class="i"><use href="#tag"/></svg></button><button aria-label="Trama"><svg class="i"><use href="#hatch"/></svg></button><button aria-label="Numerar nodos"><svg class="i"><use href="#nlink"/></svg></button><button aria-label="Altura"><svg class="i"><use href="#boxarr"/></svg></button><button aria-label="Dispersar"><svg class="i"><use href="#burst"/></svg></button><hr></div>
<div class="grp"><button aria-label="Cota alineada"><svg class="i"><use href="#dimd"/></svg></button><button aria-label="Cota horizontal"><svg class="i"><use href="#dimh"/></svg></button><button aria-label="Cota vertical"><svg class="i"><use href="#dimv"/></svg></button><button aria-label="Cota radial"><svg class="i"><use href="#dimr"/></svg></button><button aria-label="Cota angular"><svg class="i"><use href="#dima"/></svg></button></div>
</div>
</section>

<main class="work">
<aside class="left">
<section class="panel project">
<header class="phead"><h2>Proyecto</h2><i class="ridge"></i><button aria-label="Maximizar proyecto"><svg viewBox="0 0 10 10"><path d="M1 1H9V9H1ZM1 2H9" stroke-width="1.500"/></svg></button></header>
<ul class="tree">
<li class="l1"><button class="tg">−</button><i class="h"></i><svg class="i"><use href="#box"/></svg><span>Versión 1 (Actual)</span></li>
<li><i class="v h a"><button class="tg">−</button></i><svg class="i"><use href="#two"/></svg><span>2D</span></li>
<li class="l3"><i class="v b"></i><i class="v h c"></i><b class="dot"></b><span>11 - FORRO TALON</span></li>
<li class="l3"><i class="v b"></i><i class="v h c"></i><b class="dot"></b><span>8 - CUELLO LENGUETA</span></li>
<li class="l3"><i class="v b"></i><i class="v h c"></i><b class="dot"></b><span class="bold">BAS</span></li>
<li class="l3"><i class="v b"></i><i class="v h c"></i><b class="dia"></b><span>A-TALON</span></li>
<li class="l3"><i class="v b"></i><i class="v h c"></i><b class="dia"></b><span>A-LAT</span></li>
<li class="l3"><i class="v b"></i><i class="v h c"></i><b class="dia"></b><span>A-PALA</span></li>
<li class="l3"><i class="v b"></i><i class="v h c"></i><b class="dia"></b><span class="sel">A-MALLA</span></li>
<li class="l3"><i class="v b"></i><i class="v h c"></i><b class="dia"></b><span class="sel">FORRO PALA</span></li>
<li class="l3"><i class="v b"></i><i class="v h c"></i><b class="dia"></b><span>A-ELAST</span></li>
<li class="l3"><i class="v b"></i><i class="v h c last"></i><b class="dia"></b><span>A-GARI</span></li>
<li><i class="v h a"></i><svg class="i"><use href="#three"/></svg><span>3D</span></li>
<li><i class="v h a"></i><svg class="i"><use href="#pages"/></svg><span>Hojas</span></li>
<li><i class="v h a"><button class="tg">+</button></i><svg class="i"><use href="#folders"/></svg><span>PDM</span></li>
<li><i class="v h a"></i><svg class="i"><use href="#images"/></svg><span>Imágenes</span></li>
<li><i class="v h a"></i><svg class="i"><use href="#spade"/></svg><span>Símbolos</span></li>
<li><i class="v h a"><button class="tg">+</button></i><svg class="i"><use href="#table"/></svg><span>Tabla de escalado</span></li>
<li><i class="v h a"></i><svg class="i"><use href="#pclip"/></svg><span>Anexos</span></li>
<li><i class="v h a last"><button class="tg">+</button></i><svg class="i"><use href="#layers"/></svg><span>Capas (actual Agujeros)</span></li>
</ul>
</section>
<section class="panel objects">
<header class="phead"><h2>Propiedades objetos</h2><i class="ridge"></i><button aria-label="Maximizar propiedades"><svg viewBox="0 0 10 10"><path d="M1 1H9V9H1ZM1 2H9" stroke-width="1.500"/></svg></button><button aria-label="Cerrar propiedades"><svg viewBox="0 0 10 10"><path d="M2 2L8 8M8 2L2 8" stroke-width="1.800"/></svg></button></header>
<div class="grid">
<table>
<colgroup><col class="c0"><col class="c1"><col class="c2"><col class="c3"></colgroup>
<tr class="hd"><td></td><td></td><td></td><td></td></tr>
<tr class="gen"><th colspan="4"><button class="tg">−</button>General</th></tr>
<tr><td></td><th>Descripción</th><td colspan="2" class="val"><button aria-label="Editar descripción">...</button></td></tr>
<tr><td></td><th>Art.patr.original</th><td colspan="2" class="val"></td></tr>
<tr class="next"><td></td><th>Tipo</th><td colspan="2" class="val dark">Pieza</td></tr>
</table>
<div class="oldscroll"><button aria-label="Subir"><svg viewBox="0 0 18 18"><path d="M4 11H14L9 6Z"/></svg></button><i></i><button class="dn" aria-label="Bajar"><svg viewBox="0 0 18 18"><path d="M4 7H14L9 12Z"/></svg></button></div>
</div>
</section>
</aside>

<section class="canvas" aria-label="Dibujo">
<svg viewBox="258 128 1133 598" preserveAspectRatio="xMinYMin slice">
<defs>
<g id="slots"><path d="M413 425Q445 438 465 452T511 480"/><path d="M557 483Q600 476 640 453L682 429"/><path d="M719 403Q755 375 780 377 795 379 820 393L898 430"/><path d="M938 452L1008 484"/><path d="M1003 374L1055 418"/><path d="M867 167C860 200 857 215 859 235Q862 250 880 266L968 343"/></g>
</defs>
<use href="#slots" class="slot-edge"/><use href="#slots" class="slot-fill"/>
<path class="thin" d="M845 128C844 162 840 182 818 191 790 203 755 194 737 220 722 241 707 260 701 280 692 308 705 325 707 350Q708 380 694 389 676 400 655 411 610 434 580 439C520 445 492 425 478 398 464 368 476 352 440 342L412 333C393 400 371 470 361 543Q353 600 357 634 361 664 369 692L413 695Q560 698 700 698 840 701 949 708C971 655 1000 560 1042 488 1078 429 1130 370 1235 274L1165 128"/>
<path class="thick" d="M838 128Q819 180 806 240 796 300 796 378C750 455 710 545 698 625Q692 650 689 673C760 674 880 683 960 684 1060 686 1190 665 1255 627 1295 605 1323 560 1328 510 1332 440 1307 395 1245 312 1190 240 1080 183 1035 161L960 128"/>
<path class="axis" d="M697 231L1083 485"/>
<path class="main-axis" d="M764 368L1352 537"/>
<g class="lbl"><text x="753" y="503" class="num">39</text><text x="737" y="526">A-MALLA</text><text x="737" y="548">2XP</text><text x="973" y="381" class="num">39</text><text x="949" y="410">FORRO PALA</text><text x="949" y="432">2XP</text></g>
</svg>
</section>
<div class="vscroll"><button aria-label="Desplazar arriba"><svg viewBox="0 0 12 12"><path d="M2 8L6 4 10 8"/></svg></button><i class="s1"></i><i class="thumb"></i><i class="s2"></i><button aria-label="Desplazar abajo"><svg viewBox="0 0 12 12"><path d="M2 4L6 8 10 4"/></svg></button></div>

<aside class="right">
<div class="preview"><svg viewBox="0 0 76 34"><path d="M22 0H34L34 3 58 5 55 16 57 18 56 30Q50 34 43 31L30 27 24 12Z" fill="#f47b80"/><path d="M22 0H34L32 8 24 10ZM34 7L42 10 38 28 29 24Z" fill="#c83c49"/><path d="M37 4L57 6 54 15 40 16ZM41 18L56 18 55 29Q49 32 42 30Z" fill="#f4656b"/><path d="M24 4L38 10 41 17M28 12L36 18 34 26M24 10L38 4M30 22L42 16H55" fill="none" stroke="#8d202d"/></svg></div>
<div class="lib">
<button><svg class="i"><use href="#curve"/></svg>Perimet...</button>
<button><svg class="i"><use href="#curve"/></svg>Perimet...</button>
<button><svg class="i"><use href="#curve"/></svg>Marcad...</button>
<button><svg class="i"><use href="#curve"/></svg>Cortes</button>
<button><svg class="i"><use href="#parallel"/></svg>Paralela</button>
<button><svg class="i"><use href="#parallel"/></svg>Doblado</button>
<button><svg class="i"><use href="#parallel"/></svg>Empalme</button>
<button><svg class="i"><use href="#knife"/></svg>Rebajado</button>
<button><svg class="i"><use href="#knife"/></svg>Costura</button>
<button><svg class="i"><use href="#letter"/></svg>Talla pi...</button>
<button><svg class="i"><use href="#letter"/></svg>Pieza</button>
<button><svg class="i"><use href="#dash"/></svg>Eje de s...</button>
<button><svg class="i"><use href="#dash"/></svg>Eje de e...</button>
<button><svg class="i"><use href="#circle"/></svg>Agujero</button>
<button><svg class="i"><use href="#curvein"/></svg>Numer...</button>
<button><svg class="i"><use href="#notch"/></svg>Muesca...</button>
<button><svg class="i"><use href="#notch"/></svg>MP</button>
</div>
</aside>
</main>

<section class="coords">
<form>
<label for="cx">X</label><input id="cx" value="213.1" disabled><label for="cw" aria-label="Ancho"><svg class="s"><use href="#dimh"/></svg></label><input id="cw" value="217.49" disabled><span class="pct">%</span><input id="sx" aria-label="Escala X" value="100"><button type="button" aria-label="Proporcional"><svg viewBox="0 0 18 18"><path d="M2 2V15H17M1 4L2 1 4 4M14 13L17 15 14 17" /><path d="M7 6H14M7 10H14" stroke="#e22" stroke-width="1.500"/></svg></button><button type="button" class="tree-btn" aria-label="Jerarquía"><svg viewBox="0 0 20 18"><path d="M2 9H5M8 9H12M10 3V15M10 3H13M10 15H13M15 3H18M15 9H18M15 15H18" stroke="#999" stroke-width="2.500" stroke-dasharray="3 1"/></svg></button>
<label for="cy">Y</label><input id="cy" value="93.21" disabled><label for="ch" aria-label="Alto"><svg class="s"><use href="#dimv"/></svg></label><input id="ch" value="201.18" disabled><input id="sy" aria-label="Escala Y" value="100"><label for="ang" aria-label="Ángulo"><svg class="i"><use href="#reload"/></svg></label><input id="ang" value="0" disabled>
</form>
</section>
<footer class="status">
<div class="prog"><i></i></div>
<span>E</span><span class="on">S</span><span class="on">D</span><span>C</span><span>G</span><span>A</span><span>O</span><span>P</span><span>L</span><span>Q</span><span class="on">M</span><span class="on">V</span>
<button aria-label="Digitalizador desconectado"><svg viewBox="0 0 22 16"><path d="M2 2H20V6H3ZM5 6V11H15V6M4 11H10M12 13H20V9" fill="#999" stroke="#111" stroke-width="1.700"/><path d="M2 15L19 1" stroke="#e11" stroke-width="2.500"/></svg></button>
</footer>

<nav class="taskbar" aria-label="Barra de tareas">
<button class="plain" aria-label="Calculadora"><svg viewBox="0 0 36 36"><path d="M6 1H30V35H6Z" fill="#b9ddf3" stroke="#5e9ec8"/><path d="M9 7H27V15H9Z" fill="#e8e8e0" stroke="#7897a8"/><path d="M9 4H27" stroke="#e8a03d" stroke-width="2"/><path d="M21 9H25V13H21Z" fill="none" stroke="#444"/><path d="M9 21H27M9 25H27M9 29H24" stroke="#397ebc" stroke-width="2.500" stroke-dasharray="3 2"/><path d="M26 28V32" stroke="#d98b20" stroke-width="3"/></svg></button>
<button aria-label="Escritorio"><svg viewBox="0 0 36 36"><path d="M5 30L20 28 24 33 8 35Z" fill="#a8b1b8"/><path d="M4 2L12 4 14 27 9 31Z" fill="#4077ca" stroke="#4a5364" stroke-width="2"/><path d="M10 3L23 6 26 22 15 24Z" fill="#eff7ff" stroke="#86b5e5"/><path d="M17 7H25L28 22H19Z" fill="#d4e5f6"/><path d="M24 21L34 15V26L26 33Z" fill="#dcae72"/><path d="M22 20L27 17V31L23 28Z" fill="#4b3727"/></svg></button>
<button class="stack" aria-label="Explorador de archivos"><svg viewBox="0 0 36 36"><path d="M3 7L5 4H15L17 7H29L34 10V31H2V9Z" fill="#f7df80" stroke="#d9ba60"/><path d="M5 4H10V7H5Z" fill="#2da24a"/><path d="M13 6H19V9H13Z" fill="#d65a34"/><path d="M22 7H28V11H22Z" fill="#3b9fc4"/><path d="M3 12H33V28H3Z" fill="#fbe89a"/><path d="M6 35V26Q6 23 9 23H28Q31 23 31 26V35H26V28H11V35Z" fill="#83c8e7" stroke="#4795c2"/></svg></button>
<button aria-label="Chrome"><svg viewBox="0 0 36 36"><circle cx="18" cy="18" r="17" fill="#2f9b4e"/><path d="M18 18L3 10A17 17 0 0 1 33 10Z" fill="#dc3d30"/><path d="M18 18L33 10A17 17 0 0 1 20 35L26 22Z" fill="#f6c629"/><path d="M18 10H33L27 18Z" fill="#f6c629"/><path d="M3 10L10 22 18 10Z" fill="#dc3d30"/><circle cx="18" cy="18" r="8" fill="#fff"/><circle cx="18" cy="18" r="6.500" fill="#2f73d4"/><circle cx="27" cy="27" r="8" fill="#d9d2d2"/><path d="M20 26Q25 21 34 27L28 30Z" fill="#c58b8b"/><path d="M21 30Q27 34 33 30" fill="none" stroke="#fff" stroke-width="2"/></svg></button>
<button aria-label="Reproductor"><svg viewBox="0 0 36 36"><path d="M15 6H32V32L26 34 15 32Z" fill="#4e9fc8"/><path d="M5 7H28V33H5Z" fill="#80bfe0" stroke="#b8e2f5"/><circle cx="16" cy="20" r="9" fill="#ef7b23"/><path d="M13 14L22 20 13 26Z" fill="#fff"/></svg></button>
<button aria-label="CorelDRAW"><svg viewBox="0 0 36 36"><path d="M0 0H36V36H0Z" fill="#59a83f"/><path d="M1 14Q8 14 22 31L23 35 16 33Q3 22 1 14Z" fill="#fff"/><path d="M13 0H35L28 21H25Z" fill="#8ac66c"/><path d="M19 0L25 21M25 0L26 21M31 0L27 21" fill="none" stroke="#e5f3dc" stroke-width="2"/><path d="M24 23H29V28H24Z" fill="#e1efd9"/></svg></button>
<button aria-label="Bloc de notas"><svg viewBox="0 0 36 36"><path d="M14 5L31 3 34 33 24 35Z" fill="#af9d80"/><path d="M13 5L30 4 26 33 2 29Z" fill="#83c8d3" stroke="#b4dce3"/><path d="M12 6L29 5 27 13 9 14Z" fill="#bfe3e8"/><path d="M2 29L18 20 26 33Z" fill="#62aaba"/><path d="M13 4H30" stroke="#666" stroke-width="2" stroke-dasharray="1 2"/></svg></button>
<button class="active" aria-label="NAXOS"><svg viewBox="0 0 36 36"><path d="M6 2L13 7 24 22V8L31 6V35L23 28 13 14V29L6 31Z" fill="#e8e8e8" stroke="#c51420" stroke-width="2.400"/></svg></button>
<div class="tray">
<svg viewBox="0 0 20 20"><path d="M6 12H14L10 8Z" fill="#fff"/></svg>
<svg viewBox="0 0 20 20"><path d="M6 3H14V8H6Z" fill="#e8eef4"/><path d="M2 8H18V14H2Z" fill="#8c98a4" stroke="#d3dbe2"/><path d="M6 13H14V18H6Z" fill="#d4edf8" stroke="#4b80ab"/></svg>
<svg class="bat" viewBox="0 0 20 20"><path d="M4 2V6M8 2V6M6 11V18" stroke="#fff" stroke-width="1.600"/><path d="M2 6H10V9L8 12H4L2 9Z" fill="#fff"/><path d="M12 4H18V17H12ZM14 2H16V4" fill="#a77059" stroke="#fff" stroke-width="1.800"/></svg>
<svg viewBox="0 0 20 20"><path d="M3.500 15V17M7 13V17M10.500 10V17M14 7V17M17.500 4V17" stroke="#fff" stroke-width="2.400"/></svg>
<svg viewBox="0 0 20 20"><path d="M3 2V18" stroke="#fff" stroke-width="1.500"/><path d="M4 3H10L17 5V11H4Z" fill="#fff"/><circle cx="14" cy="13" r="5" fill="#dc2a2a"/><path d="M12 11L16 15M16 11L12 15" stroke="#fff" stroke-width="1.600"/></svg>
</div>
<time class="clock"><span>18:56</span><span>27/05/2024</span></time>
</nav>
</body>
</html>
```
FILE: styles.css
```css
* { box-sizing: border-box; }
body { margin: 0; height: 100vh; display: flex; flex-direction: column; overflow: hidden; background: #efefef; color: #222; font: 12px/16px "Open Sans", "Noto Sans", sans-serif; }
button { appearance: none; margin: 0; padding: 0; border: 0; background: none; color: inherit; font: inherit; display: flex; align-items: center; justify-content: center; }
h1, h2, ul { margin: 0; padding: 0; font-weight: 400; }
.sprite { position: absolute; width: 0; height: 0; }
.i { width: 18px; height: 18px; flex: none; fill: none; stroke: #222; display: block; }

.titlebar { flex: none; height: 25px; display: grid; grid-template-columns: 1fr auto 1fr; align-items: center; background: #e99168; padding-left: 2px; }
.titlebar h1 { font-size: 16px; line-height: 24px; color: #4b3025; }
.winbtns { display: flex; justify-content: flex-end; align-self: start; padding-right: 3px; }
.winbtns button { width: 28px; height: 21px; }
.winbtns svg { width: 12px; height: 12px; fill: none; stroke: #222; }
.winbtns .close { width: 50px; background: #c8504f; }
.winbtns .close svg { stroke: #fff; }

.menubar { flex: none; height: 23px; display: flex; align-items: center; gap: 14px; padding-left: 7px; background: #f5f6f8; border-bottom: 1px solid #c4c4c4; font-size: 13px; color: #111; }
.menubar > .i { margin-right: -6px; }
.mdi { margin-left: auto; display: flex; gap: 2px; padding-right: 1px; }
.mdi button { width: 19px; height: 19px; background: #dbe9f5; border: 1px solid #a9bccd; }
.mdi svg { width: 12px; height: 12px; fill: none; stroke: #6f7f8e; }

.toolbars { flex: none; border-bottom: 1px solid #777; }
.row { display: flex; height: 27px; border-bottom: 1px solid #fff; }
.row:last-child { height: 25px; }
.grp { display: flex; align-items: center; margin-left: 4px; padding: 0 4px 0 2px; border-left: 1px solid #aaa; border-right: 1px solid #aaa; border-bottom: 1px solid #a5a5a5; box-shadow: inset 1px 0 #fff, 1px 0 #fff; }
.grp + .grp { margin-left: 3px; padding-right: 3px; padding-left: 3px; }
.grp.wide { margin-left: 9px; padding-left: 4px; }
.grp.extra { margin-left: 13px; }
.grp button { width: 25px; height: 24px; }
.grp .dd { width: 17px; color: #111; }
.grp .dd.off { color: #aaa; }
.grp hr { width: 1px; height: 20px; margin: 0 5px 0 4px; border: 0; background: #aaa; }

.work { flex: 1; min-height: 0; display: flex; }
.left { flex: none; width: 258px; display: flex; flex-direction: column; border-right: 2px solid #808087; background: #f5f5f5; padding-right: 5px; }
.panel { background: #efefef; border-right: 1px solid #aaa; }
.project { flex: 1; min-height: 0; display: flex; flex-direction: column; padding: 0 9px 9px 8px; border-bottom: 1px solid #aaa; }
.phead { flex: none; display: flex; align-items: center; gap: 4px; height: 20px; }
.project .phead { margin-right: -4px; gap: 5px; }
.phead h2 { font: 14px/20px "Liberation Sans", sans-serif; color: #c3ccd9; padding-left: 5px; }
.ridge { flex: 1; height: 6px; border-top: 1px solid #aaa; border-bottom: 1px solid #aaa; background: #fff; }
.phead button { width: 12px; height: 12px; border-right: 1px solid #777; border-bottom: 1px solid #777; }
.phead button svg { width: 10px; height: 10px; stroke: #111; fill: none; }
.tree { flex: 1; min-height: 0; margin-top: 6px; background: #fff; border: 2px solid #808080; border-right: 1px solid #ddd; border-bottom: 1px solid #ddd; list-style: none; display: grid; grid-template-rows: repeat(20, minmax(0, 1fr)); padding-bottom: 98px; font: 12px/16px "Liberation Sans", sans-serif; }
.tree li { min-height: 0; display: flex; align-items: center; padding-left: 30px; }
.tree .l1 { padding-left: 5px; }
.l1 .h { width: 6px; height: 1px; background: #aaa; }
.tree span { margin-left: 4px; white-space: nowrap; }
.l3 span { padding: 0 2px; line-height: 16px; }
.tree .bold { font-weight: 700; color: #000; }
.tree .sel { background: #efefef; }
.v { height: 100%; flex: none; display: flex; align-items: center; background: repeating-linear-gradient(#999 0 1px, transparent 1px 2px) 0 0 / 1px 100% no-repeat; }
.v.h { background: repeating-linear-gradient(#999 0 1px, transparent 1px 2px) 0 0 / 1px 100% no-repeat, repeating-linear-gradient(90deg, #999 0 1px, transparent 1px 2px) 0 50% / 100% 1px no-repeat; }
.v.h.last { background-size: 1px 50%, 100% 1px; }
.a { width: 13px; }
.b { width: 21px; }
.c { width: 12px; margin-right: 2px; }
.tg { width: 9px; height: 9px; border: 1px solid #888; background: #fff; font: 10px/7px "Liberation Sans", sans-serif; color: #000; }
.a .tg { margin-left: -4px; }
.dot { width: 12px; height: 12px; border-radius: 50%; background: #f00; margin-right: 3px; }
.dia { width: 14px; height: 14px; margin: 0 2px 0 -1px; background: #00f; clip-path: polygon(50% 0, 100% 50%, 50% 100%, 0 50%); }

.objects { flex: none; margin-top: 6px; padding: 0 5px 2px 4px; border-top: 2px solid #888; }
.objects .phead { padding-left: 4px; gap: 3px; height: 22px; }
.grid { display: flex; height: 78px; overflow: hidden; border: 2px solid #777; border-right-color: #999; border-bottom-color: #999; font: 12px/16px "Liberation Sans", sans-serif; }
.grid table { flex: 1; table-layout: fixed; border-collapse: collapse; background: #fff; align-self: flex-start; }
.grid td, .grid th { padding: 0; font-weight: 400; text-align: left; }
.c0 { width: 10px; } .c1 { width: 95px; } .c2 { width: 55px; }
.grid tr { height: 20px; }
.grid .hd { height: 8px; }
.grid .next { line-height: 12px; vertical-align: top; }
.hd td { border-right: 1px solid #999; border-bottom: 1px solid #999; background: #efefef; }
.grid .gen th { background: #f0f0f0; border-bottom: 1px solid #999; color: #111; }
.gen .tg { display: inline-flex; width: 12px; height: 12px; margin: 0 10px 0 3px; vertical-align: -1px; }
.grid th { background: #efefef; color: #888; padding-left: 5px; }
.grid .gen th { padding-left: 0; }
.grid .val { border-bottom: 1px solid #ccc; }
.grid .dark { color: #111; padding-left: 4px; }
.val button { width: 18px; height: 18px; margin-left: auto; background: #efefef; border: 1px solid #ddd; border-right-color: #888; border-bottom-color: #888; color: #111; }
.oldscroll { width: 21px; padding-left: 3px; background: #f6f6f6; display: flex; flex-direction: column; }
.oldscroll button, .oldscroll i { width: 18px; height: 19px; background: #efefef; border-right: 2px solid #777; border-bottom: 2px solid #777; }
.oldscroll i { height: 9px; }
.oldscroll .dn { margin-top: auto; }
.oldscroll svg { width: 16px; height: 18px; fill: #000; }

.canvas { flex: 1; min-width: 0; background: #a0a0a4; overflow: hidden; }
.canvas svg { display: block; width: 100%; height: 100%; fill: none; }
.slot-edge { stroke: #1414e6; stroke-width: 6; stroke-linecap: round; }
.slot-fill { stroke: #a0a0a4; stroke-width: 4; stroke-linecap: round; }
.thin { stroke: #222; stroke-width: 1; }
.thick { stroke: #000; stroke-width: 2; }
.axis { stroke: #1414e6; stroke-width: 1; stroke-dasharray: 8 3 3 3; }
.main-axis { stroke: #00f; stroke-width: 2; }
.lbl { fill: #000; font: 700 14px "Liberation Sans", sans-serif; }
.num { font-size: 22px; }
.vscroll { flex: none; width: 20px; display: flex; flex-direction: column; background: #f0f0f0; padding: 0 2px 0 1px; border-right: 2px solid #fff; }
.vscroll button { height: 20px; }
.vscroll svg { width: 12px; height: 12px; fill: none; stroke: #555; stroke-width: 2; }
.s1 { flex: 32; } .thumb { flex: 343; background: #cdcdcd; } .s2 { flex: 183; }
.right { flex: none; width: 89px; padding-top: 4px; border-bottom: 1px solid #aaa; }
.preview { width: 76px; height: 34px; margin: 0 0 33px 4px; background: #fff; border-top: 2px solid #888; border-left: 2px solid #888; }
.preview svg { display: block; width: 100%; height: 100%; }
.lib { margin-right: 4px; padding: 2px 0 0 6px; border-top: 1px solid #aaa; border-bottom: 1px solid #aaa; border-right: 2px solid #bbb; }
.lib::before { content: ""; display: block; height: 5px; margin: 0 0 1px -6px; border-bottom: 1px solid #aaa; background: #fff; }
.lib button { height: 23px; gap: 2px; justify-content: flex-start; white-space: nowrap; }

.coords { flex: none; height: 51px; display: grid; grid-template-columns: 202px 866px 1fr; border-top: 1px solid #fff; border-bottom: 1px solid #aaa; }
.coords form { grid-column: 2; border-left: 1px solid #999; border-right: 1px solid #aaa; padding: 0 0 0 4px; display: grid; grid-template-columns: 11px 43px 19px 44px 16px 43px 26px 44px; grid-template-rows: 21px 21px; row-gap: 2px; align-items: center; }
.coords label { display: flex; justify-content: center; font-size: 14px; color: #444; }
.coords input { width: 100%; height: 21px; padding: 0 1px; border: 2px solid #888; border-right: 1px solid #fff; border-bottom: 1px solid #fff; background: #fff; color: #111; font: 12px/16px "Liberation Sans", sans-serif; border-radius: 0; }
.coords input:disabled { background: #efefef; color: #888; }
.pct { grid-row: 1 / 3; grid-column: 5; text-align: center; }
.s { width: 15px; height: 15px; fill: none; stroke: #222; }
.coords button { height: 21px; margin-left: 3px; border-right: 2px solid #888; border-bottom: 2px solid #888; }
.coords button.tree-btn { margin-left: 0; }
.coords button svg { width: 18px; height: 18px; fill: none; stroke: #222; }

.status { flex: none; height: 22px; display: flex; justify-content: flex-end; align-items: center; gap: 5px; padding: 2px 1px 2px 0; font: 12px/16px "Liberation Sans", sans-serif; color: #999; }
.status span, .prog { height: 18px; padding-left: 2px; min-width: 11px; border-left: 1px solid #aaa; border-top: 1px solid #aaa; }
.status .on { color: #111; }
.prog { flex: none; width: 114px; padding-left: 40px; display: flex; }
.prog i { flex: 1; border-left: 1px solid #999; border-top: 1px solid #999; }
.status button { width: 26px; border-left: 1px solid #aaa; }
.status button svg { width: 22px; height: 16px; }

.taskbar { flex: none; height: 44px; display: flex; align-items: center; padding-left: 16px; gap: 4px; background: linear-gradient(90deg, #8d5239, #96583d 50%, #9c5d3e); border-top: 1px solid #764530; color: #fff; }
.taskbar > button { width: 64px; height: 42px; background: #a57a67; border: 1px solid #c5a08f; }
.taskbar > button svg { width: 36px; height: 36px; }
.taskbar > .plain { width: 67px; background: none; border: 0; }
.taskbar > .active { background: #c2a397; border-color: #e2cfc6; }
.taskbar > .stack { padding-right: 8px; background: linear-gradient(90deg, transparent 55px, #c5a08f 55px 56px, transparent 56px 59px, #c5a08f 59px 60px, transparent 60px) #a57a67; }
.tray { margin-left: auto; display: flex; align-items: center; gap: 7px; }
.tray svg { width: 20px; height: 20px; }
.tray .bat { margin-left: 6px; }
.clock { width: 80px; margin: 0 20px 0 2px; display: grid; justify-items: center; line-height: 18px; }
```
